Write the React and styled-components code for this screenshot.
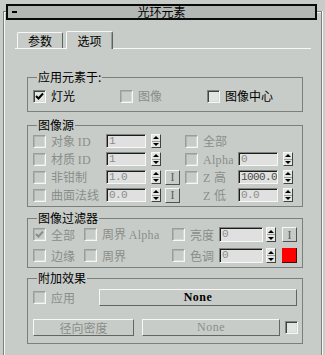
import React from 'react';
import styled, { createGlobalStyle } from 'styled-components';

const BG = '#c8ccc8';
const DIS = '#8a8e8a';
const FRAME = '#7c807c';
const LIGHT = '#f6f7f6';
const CJK = `"Noto Sans CJK SC", "Liberation Sans", sans-serif`;
const MONO = `"Liberation Mono", "DejaVu Sans Mono", monospace`;
const SERIF = `"Liberation Serif", "DejaVu Serif", serif`;

const Global = createGlobalStyle`
  html, body { margin: 0; padding: 0; background: ${BG}; }
  body { font-family: ${CJK}; font-size: 12px; color: #000; }
  * { box-sizing: border-box; }
`;

const Page = styled.div`
  width: 325px;
  height: 355px;
  overflow: hidden;
  background: ${BG};
  padding: 11px 3px 0 3px;
`;

const Rollout = styled.div`
  height: 344px;
  border: 1px solid ${FRAME};
  border-bottom: none;
  box-shadow: inset 1px 1px 0 ${LIGHT}, 1px 0 0 ${LIGHT};
`;

const TitleBar = styled.div`
  margin: -8px 4px 0 2px;
  height: 16px;
  border: 2px solid #0a0a0a;
  background: #b4b8b4;
  display: grid;
  grid-template-columns: 20px 1fr 20px;
  align-items: center;
  font-size: 12px;
  line-height: 12px;
`;

const Collapse = styled.span`
  justify-self: start;
  margin-left: 4px;
  width: 5px;
  height: 2px;
  background: #000;
`;

const Title = styled.span`
  text-align: center;
`;

const TabStrip = styled.div`
  display: flex;
  align-items: flex-end;
  gap: 3px;
  margin: 11px 0 0 11px;
  width: 296px;
  height: 18px;
  padding-left: 2px;
  border-bottom: 1px solid ${LIGHT};
`;

const Tab = styled.div`
  width: ${(p) => (p.$active ? 47 : 46)}px;
  height: ${(p) => (p.$active ? 18 : 16)}px;
  margin-bottom: ${(p) => (p.$active ? '-1px' : '0')};
  border: 1px solid;
  border-bottom: none;
  border-color: ${LIGHT} #5e625e ${LIGHT} ${LIGHT};
  box-shadow: ${(p) => (p.$active ? 'inset -1px 0 0 #9a9e9a' : 'none')};
  border-radius: 2px 2px 0 0;
  background: ${BG};
  display: flex;
  align-items: center;
  justify-content: center;
  font-size: 12px;
  line-height: 14px;
  padding-top: ${(p) => (p.$active ? '1px' : '0')};
`;

const Panel = styled.div`
  margin: 21px 0 0 23px;
  width: 276px;
  display: flex;
  flex-direction: column;
`;

const Group = styled.fieldset`
  margin: ${(p) => p.$mt}px 0 0 0;
  padding: ${(p) => p.$pt}px 4px ${(p) => p.$pb}px 5px;
  border: 1px solid ${FRAME};
  min-width: 0;
`;

const Legend = styled.legend`
  padding: 0 1px;
  margin-left: 4px;
  font-size: 12px;
  line-height: 14px;
  height: 14px;
`;

const ApplyRow = styled.div`
  display: grid;
  grid-template-columns: 87px 87px auto;
  height: 14px;
  align-items: center;
`;

const CheckItem = styled.div`
  display: flex;
  align-items: center;
  gap: 5px;
  height: 14px;
  line-height: 14px;
  white-space: nowrap;
  color: ${(p) => (p.$disabled ? DIS : '#000')};
`;

const Box = styled.span`
  flex: none;
  width: 13px;
  height: 13px;
  display: inline-flex;
  align-items: center;
  justify-content: center;
  border: 1px solid;
  border-color: ${(p) => (p.$disabled ? '#9a9e9a' : '#808480')} ${LIGHT} ${LIGHT}
    ${(p) => (p.$disabled ? '#9a9e9a' : '#808480')};
  box-shadow: inset 1px 1px 0 ${(p) => (p.$disabled ? '#b0b4b0' : '#404440')},
    inset -1px -1px 0 #d8dcd8;
  background: ${(p) => (p.$disabled ? BG : '#e2e4e2')};
`;

const Spacer = styled.span`
  flex: none;
  width: 13px;
  height: 13px;
`;

const Latin = styled.span`
  font-family: ${SERIF};
  font-size: 12px;
  letter-spacing: 0.3px;
`;

const SrcGrid = styled.div`
  display: grid;
  grid-template-columns: 68px 40px 9px 15px 48px 40px 10px;
  column-gap: 5px;
  row-gap: 4px;
  grid-auto-rows: 14px;
  align-items: center;
`;

const Field = styled.div`
  width: ${(p) => p.$w}px;
  height: ${(p) => p.$h || 14}px;
  border: 1px solid;
  border-color: #808480 ${LIGHT} ${LIGHT} #808480;
  box-shadow: inset 1px 1px 0 #1c1c1c;
  background: #dfe0df;
  padding-left: 2px;
  font-family: ${MONO};
  font-size: 11px;
  letter-spacing: -0.6px;
  line-height: ${(p) => (p.$h || 14) - 2}px;
  color: ${(p) => p.$color || DIS};
  overflow: hidden;
  white-space: nowrap;
`;

const SpinBox = styled.div`
  width: 10px;
  height: ${(p) => p.$h || 14}px;
  display: flex;
  flex-direction: column;
  border: 1px solid;
  border-color: ${LIGHT} #404440 #404440 ${LIGHT};
  background: #e4e6e4;
`;

const SpinHalf = styled.span`
  flex: 1;
  display: flex;
  align-items: center;
  justify-content: center;
  & + & {
    border-top: 1px solid #9a9e9a;
  }
`;

const Arrow = styled.span`
  width: 0;
  height: 0;
  border-left: 3px solid transparent;
  border-right: 3px solid transparent;
  ${(p) => (p.$down ? 'border-top: 3px solid #000;' : 'border-bottom: 3px solid #000;')}
`;

const IconBtn = styled.div`
  width: 15px;
  height: 15px;
  border: 1px solid;
  border-color: ${LIGHT} #505450 #505450 ${LIGHT};
  background: ${BG};
  display: flex;
  align-items: center;
  justify-content: center;
  font-family: ${SERIF};
  font-size: 12px;
  line-height: 12px;
  color: #5a5e5a;
`;

const Swatch = styled.div`
  width: 15px;
  height: 15px;
  background: #ff0000;
  border-right: 1px solid #3a1010;
  border-bottom: 1px solid #3a1010;
`;

const FilterGrid = styled.div`
  display: grid;
  grid-template-columns: 51px 88px 47px 47px 16px 15px;
  row-gap: 6px;
  grid-auto-rows: 15px;
  align-items: center;
`;

const EffectRow1 = styled.div`
  display: grid;
  grid-template-columns: 66px 198px;
  height: 17px;
  align-items: center;
`;

const EffectRow2 = styled.div`
  display: grid;
  grid-template-columns: 109px 143px 13px;
  height: 17px;
  margin-top: 13px;
  align-items: center;
`;

const Button = styled.div`
  width: ${(p) => p.$w}px;
  height: 17px;
  border: 1px solid;
  border-color: ${LIGHT} #626662 #626662 ${LIGHT};
  background: ${BG};
  display: flex;
  align-items: center;
  justify-content: center;
  color: ${(p) => (p.$disabled ? DIS : '#000')};
  font-family: ${(p) => (p.$latin ? SERIF : CJK)};
  font-weight: ${(p) => (p.$bold ? 700 : 400)};
  font-size: 12px;
  letter-spacing: ${(p) => (p.$latin ? '0.5px' : '0')};
  line-height: 15px;
`;

function Check({ checked, disabled }) {
  return (
    <Box $disabled={disabled}>
      {checked && (
        <svg width="9" height="9" viewBox="0 0 9 9">
          <path
            d="M1 4 L3.5 6.5 L8 1.5"
            fill="none"
            stroke={disabled ? '#8a8e8a' : '#000'}
            strokeWidth="2"
          />
        </svg>
      )}
    </Box>
  );
}

function Spinner({ h }) {
  return (
    <SpinBox $h={h}>
      <SpinHalf>
        <Arrow />
      </SpinHalf>
      <SpinHalf>
        <Arrow $down />
      </SpinHalf>
    </SpinBox>
  );
}

function Item({ children, checked, disabled = true, noBox }) {
  return (
    <CheckItem $disabled={disabled}>
      {noBox ? <Spacer /> : <Check checked={checked} disabled={disabled} />}
      <span>{children}</span>
    </CheckItem>
  );
}

export default function App() {
  return (
    <Page>
      <Global />
      <Rollout>
        <TitleBar>
          <Collapse />
          <Title>光环元素</Title>
          <span />
        </TitleBar>
        <TabStrip>
          <Tab>参数</Tab>
          <Tab $active>选项</Tab>
        </TabStrip>
        <Panel>
          <Group $mt={0} $pt={5} $pb={8}>
            <Legend>应用元素于:</Legend>
            <ApplyRow>
              <Item checked disabled={false}>灯光</Item>
              <Item>图像</Item>
              <Item disabled={false}>图像中心</Item>
            </ApplyRow>
          </Group>

          <Group $mt={6} $pt={2} $pb={4}>
            <Legend>图像源</Legend>
            <SrcGrid>
              <Item>
                对象 <Latin>ID</Latin>
              </Item>
              <Field $w={40}>1</Field>
              <Spinner />
              <span />
              <Item>全部</Item>
              <span />
              <span />

              <Item>
                材质 <Latin>ID</Latin>
              </Item>
              <Field $w={40}>1</Field>
              <Spinner />
              <span />
              <Item>
                <Latin>Alpha</Latin>
              </Item>
              <Field $w={40}>0</Field>
              <Spinner />

              <Item>非钳制</Item>
              <Field $w={40}>1.0</Field>
              <Spinner />
              <IconBtn>I</IconBtn>
              <Item>
                <Latin>Z </Latin>高
              </Item>
              <Field $w={40} $color="#4a4e4a">1000.0</Field>
              <Spinner />

              <Item>曲面法线</Item>
              <Field $w={40}>0.0</Field>
              <Spinner />
              <IconBtn>I</IconBtn>
              <Item noBox>
                <Latin>Z </Latin>低
              </Item>
              <Field $w={40}>0.0</Field>
              <Spinner />
            </SrcGrid>
          </Group>

          <Group $mt={4} $pt={2} $pb={4}>
            <Legend>图像过滤器</Legend>
            <FilterGrid>
              <Item checked>全部</Item>
              <Item>
                周界 <Latin>Alpha</Latin>
              </Item>
              <Item>亮度</Item>
              <Field $w={44} $h={15}>0</Field>
              <Spinner h={15} />
              <IconBtn>I</IconBtn>

              <Item>边缘</Item>
              <Item>周界</Item>
              <Item>色调</Item>
              <Field $w={44} $h={15}>0</Field>
              <Spinner h={15} />
              <Swatch />
            </FilterGrid>
          </Group>

          <Group $mt={3} $pt={4} $pb={7}>
            <Legend>附加效果</Legend>
            <EffectRow1>
              <Item>应用</Item>
              <Button $w={198} $latin $bold>
                None
              </Button>
            </EffectRow1>
            <EffectRow2>
              <Button $w={101} $disabled>
                径向密度
              </Button>
              <Button $w={138} $latin $disabled>
                None
              </Button>
              <Check />
            </EffectRow2>
          </Group>
        </Panel>
      </Rollout>
    </Page>
  );
}
